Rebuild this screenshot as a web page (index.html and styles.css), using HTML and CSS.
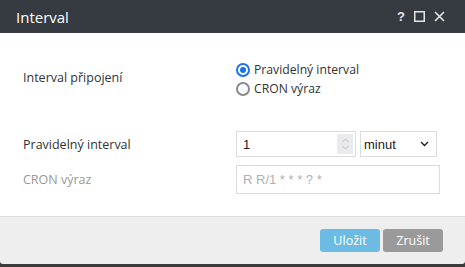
FILE: index.html
```html
<!DOCTYPE html>
<html>
<head>
<meta charset="utf-8">
<link rel="stylesheet" href="styles.css">
</head>
<body>
<div class="dialog">
  <div class="titlebar">
    <span class="title">Interval</span>
    <div class="tools">
      <span class="tool help">?</span>
      <svg class="tool" width="11" height="11" viewBox="0 0 11 11"><rect x="0.75" y="0.75" width="9.5" height="9.5" fill="none" stroke="#e6e6e6" stroke-width="1.5"/></svg>
      <svg class="tool" width="11" height="11" viewBox="0 0 11 11"><path d="M1 1L10 10M10 1L1 10" stroke="#e6e6e6" stroke-width="1.6"/></svg>
    </div>
  </div>
  <div class="content">
    <div class="row row-radio">
      <div class="label label-top">Interval připojení</div>
      <div class="radios">
        <label class="radio"><span class="dot checked"></span>Pravidelný interval</label>
        <label class="radio"><span class="dot"></span>CRON výraz</label>
      </div>
    </div>
    <div class="row row-interval">
      <div class="label">Pravidelný interval</div>
      <div class="controls">
        <div class="numbox">
          <span class="numval">1</span>
          <span class="spin">
            <svg width="9" height="16" viewBox="0 0 9 16"><path d="M1.5 6L4.5 3L7.5 6M1.5 10L4.5 13L7.5 10" fill="none" stroke="#b9b9c0" stroke-width="1"/></svg>
          </span>
        </div>
        <div class="select">
          <span>minut</span>
          <svg width="9" height="6" viewBox="0 0 9 6"><path d="M1 1L4.5 4.5L8 1" fill="none" stroke="#222" stroke-width="1.4"/></svg>
        </div>
      </div>
    </div>
    <div class="row row-cron">
      <div class="label disabled">CRON výraz</div>
      <div class="cronbox">R R/1 * * * ? *</div>
    </div>
  </div>
  <div class="footer">
    <button class="btn save">Uložit</button>
    <button class="btn cancel">Zrušit</button>
  </div>
</div>
</body>
</html>
```

FILE: styles.css
```css
html, body {
  margin: 0;
  padding: 0;
}
body {
  background: #3b3b3b;
  width: 465px;
  height: 267px;
  overflow: hidden;
  font-family: "Open Sans", "Noto Sans", sans-serif;
}
.dialog {
  width: 465px;
  height: 264px;
  display: flex;
  flex-direction: column;
  border-radius: 3px;
  overflow: hidden;
}
.titlebar {
  height: 33px;
  background: #363a41;
  display: flex;
  align-items: center;
  justify-content: space-between;
  padding: 0 20px 0 16px;
  flex: none;
}
.title {
  color: #fff;
  font-size: 15px;
}
.tools {
  display: flex;
  align-items: center;
  gap: 9px;
}
.tool.help {
  color: #e6e6e6;
  font-size: 13px;
  font-weight: bold;
  font-family: "Liberation Sans", sans-serif;
}
.content {
  flex: 1;
  background: #fff;
  padding: 27px 0 0 23px;
  display: flex;
  flex-direction: column;
}
.row {
  display: grid;
  grid-template-columns: 213px 1fr;
  align-items: center;
}
.label {
  font-size: 12.5px;
  color: #333;
}
.label-top {
  margin-bottom: 4px;
}
.label.disabled {
  color: #999;
}
.radios {
  display: flex;
  flex-direction: column;
}
.radio {
  display: flex;
  align-items: center;
  font-size: 12.2px;
  color: #333;
  height: 19px;
}
.dot {
  width: 10px;
  height: 10px;
  border: 2px solid #8a8a8a;
  border-radius: 50%;
  margin-right: 4px;
  box-sizing: content-box;
  position: relative;
  flex: none;
}
.dot.checked {
  border-color: #1a73e8;
}
.dot.checked::after {
  content: "";
  position: absolute;
  left: 2px;
  top: 2px;
  width: 6px;
  height: 6px;
  border-radius: 50%;
  background: #1a73e8;
}
.row-interval {
  margin-top: 33px;
}
.controls {
  display: flex;
  gap: 4px;
}
.numbox {
  width: 120px;
  height: 26px;
  box-sizing: border-box;
  border: 1px solid #dcdcdc;
  display: flex;
  align-items: center;
  justify-content: space-between;
  padding: 0 2px 0 6px;
  font-family: "Liberation Sans", sans-serif;
  font-size: 13px;
  color: #222;
}
.spin {
  width: 16px;
  height: 20px;
  background: #ebebef;
  display: flex;
  align-items: center;
  justify-content: center;
}
.select {
  width: 77px;
  height: 26px;
  box-sizing: border-box;
  border: 1px solid #dcdcdc;
  display: flex;
  align-items: center;
  justify-content: space-between;
  padding: 0 7px 0 3px;
  font-family: "Liberation Sans", sans-serif;
  font-size: 13px;
  color: #222;
}
.row-cron {
  margin-top: 8px;
}
.cronbox {
  width: 204px;
  height: 29px;
  box-sizing: border-box;
  border: 1px solid #dcdcdc;
  display: flex;
  align-items: center;
  padding-left: 6px;
  font-family: "Liberation Sans", sans-serif;
  font-size: 13px;
  color: #b0b0b0;
}
.footer {
  height: 47px;
  flex: none;
  background: #eeeeee;
  border-top: 1px solid #dddddd;
  display: flex;
  justify-content: flex-end;
  align-items: center;
  gap: 3px;
  padding-right: 22px;
}
.btn {
  width: 60px;
  height: 23px;
  border: none;
  border-radius: 3px;
  color: #fff;
  font-family: "Open Sans", sans-serif;
  font-size: 12.5px;
  padding: 0;
}
.btn.save {
  background: #6cbbe2;
}
.btn.cancel {
  background: #9a9a9a;
}
```
